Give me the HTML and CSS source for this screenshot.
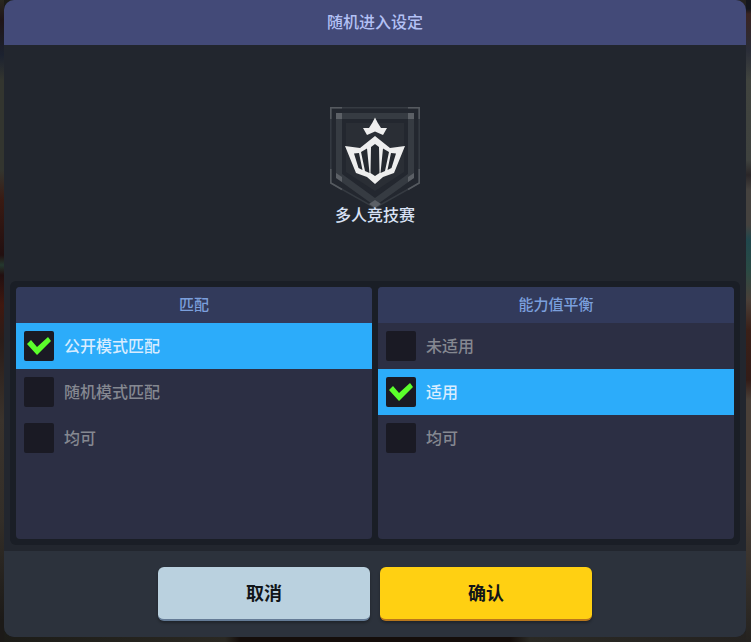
FILE: index.html
```
<!DOCTYPE html>
<html lang="zh-CN">
<head>
  <meta charset="UTF-8">
  <meta name="viewport" content="width=device-width, initial-scale=1.0">
  <title>随机进入设定</title>
  <link rel="stylesheet" href="styles.css">
</head>
<body>
  <form class="dialog">
    <h1 class="title">随机进入设定</h1>

    <div class="mode">
      <svg class="emblem" width="90" height="104" viewBox="0 0 90 104" aria-hidden="true">
        <!-- outer frame -->
        <path d="M.8 .8H89.2V76L45 101 .8 76Z" fill="#23272f" stroke="#363b42" stroke-width="1.5"/>
        <path d="M.8 12V.8H12M78 .8H89.2V12M.8 62V76L12 82.5M89.2 62V76L78 82.5" fill="none" stroke="#565a60" stroke-width="1.5"/>
        <!-- thick band -->
        <path d="M6 6H84V71L45 99 6 71ZM12 12V67L45 91 78 67V12Z" fill="#363b42" fill-rule="evenodd"/>
        <path d="M6 6H12V12H6ZM78 6H84V12H78ZM6 66L12 70V75L6 71ZM84 66L78 70V75L84 71ZM45 93L51 97 45 101 39 97Z" fill="#5c6066"/>
        <path d="M16 16H74V65L45 84 16 65Z" fill="#2a2e35"/>
        <!-- helmet -->
        <path d="M45 10.500Q48 17 51 21L57 21 53 28 45 24.500 37 28 33 21 39 21Q42 17 45 10.500Z" fill="#eee"/>
        <path d="M45 29L60 41 75 39 64 66 53 70 45 77 37 70 26 66 15 39 30 41Z" fill="#eee"/>
        <path d="M24 46.500L29 46 32.500 63 28.500 61ZM31 45L37 41.500 39.500 66 35 64ZM41 40L45 37 49 40 49.500 66 45 69 40.500 66ZM53 41.500L59 45 55 64 50.500 66ZM61 46L66 46.500 61.500 61 57.500 63Z" fill="#252930"/>
      </svg>
      <p class="mode-name">多人竞技赛</p>
    </div>

    <div class="options">
      <fieldset class="group" aria-labelledby="match-title">
        <h2 class="group-title" id="match-title">匹配</h2>
        <label class="option"><input type="checkbox" name="match" value="open" checked><span>公开模式匹配</span></label>
        <label class="option"><input type="checkbox" name="match" value="random"><span>随机模式匹配</span></label>
        <label class="option"><input type="checkbox" name="match" value="any"><span>均可</span></label>
      </fieldset>
      <fieldset class="group" aria-labelledby="balance-title">
        <h2 class="group-title" id="balance-title">能力值平衡</h2>
        <label class="option"><input type="checkbox" name="balance" value="off"><span>未适用</span></label>
        <label class="option"><input type="checkbox" name="balance" value="on" checked><span>适用</span></label>
        <label class="option"><input type="checkbox" name="balance" value="any"><span>均可</span></label>
      </fieldset>
    </div>

    <div class="actions">
      <button class="button cancel" type="button">取消</button>
      <button class="button confirm" type="button">确认</button>
    </div>
  </form>
</body>
</html>
```
FILE: styles.css
```
* {
  box-sizing: border-box;
}
body {
  margin: 0;
  padding: 0 5px 5px 4px;
  min-height: 100vh;
  display: flex;
  font-family: "Noto Sans CJK SC", sans-serif;
  color: #d9e2f5;
  /* dimmed game scene behind the dialog */
  background:
    linear-gradient(#14161c 0, #14161c 9px, #3a2422 14px, #2a2d38 50px, #41443f 80px, #3f423f 160px, #2a2628 175px, #45423f 190px, #45423f 225px, #20474d 240px, #2a4a44 270px, #4a3f38 300px, #3a2018 330px, #331c17 380px, #4a4038 400px, #4a4038 500px, #252320 640px) right / 5px 100% no-repeat,
    linear-gradient(#2a2820 0, #1f1518 20px, #1c2230 55px, #33352f 80px, #33352f 170px, #3a1a12 200px, #220f10 255px, #24382f 265px, #220f10 275px, #40180f 305px, #2a1c18 340px, #3a332c 420px, #332e28 520px, #1c1a18 620px) left / 4px 100% no-repeat,
    linear-gradient(90deg, #1c1c18 0, #2a2822 225px, #140d0a 240px, #140d0a 510px, #2a2924 530px, #242220 100%);
}
.dialog {
  flex: 1;
  display: flex;
  flex-direction: column;
  border-radius: 10px;
  overflow: hidden;
  background-color: #22262e;
}
.title {
  margin: 0;
  padding: 9px 0 12px;
  background-color: #434a78;
  color: #b3c1f5;
  font-size: 16px;
  font-weight: 500;
  line-height: 24px;
  text-align: center;
}
.mode {
  flex: 1;
  display: flex;
  flex-direction: column;
  align-items: center;
  justify-content: center;
  padding-top: 7px;
}
.emblem {
  display: block;
}
.mode-name {
  position: relative; /* keeps the name above the emblem tip */
  margin: -9px 0 0;
  font-size: 16px;
  font-weight: 500;
  line-height: 24px;
}
.options {
  display: grid;
  grid-template-columns: 1fr 1fr;
  gap: 6px;
  margin: 0 6px 6px;
  padding: 6px;
  border-radius: 6px;
  background-color: #1a1e26;
}
.group {
  margin: 0;
  padding: 0;
  min-width: 0;
  min-height: 252px;
  border: none;
  border-radius: 4px;
  overflow: hidden;
  background-color: #2c2f44;
}
.group-title {
  margin: 0;
  padding-bottom: 2px;
  background-color: #323a5b;
  color: #7b9fdc;
  font-size: 15px;
  font-weight: 500;
  line-height: 34px;
  text-align: center;
}
.option {
  display: flex;
  align-items: center;
  gap: 10px;
  height: 46px;
  padding: 0 8px;
  color: #858891;
  font-size: 16px;
  font-weight: 500;
  cursor: pointer;
}
.option span {
  padding-bottom: 2px;
}
.option:has(:checked) {
  background-color: #2cacfa;
  color: #d8ecff;
}
.option input {
  appearance: none;
  flex: none;
  width: 30px;
  height: 30px;
  margin: 0;
  border-radius: 2px;
  background-color: #1a1a24;
}
.option input:checked::before {
  content: "";
  display: block;
  height: 100%;
  background-color: #5bff2b;
  clip-path: polygon(3px 13px, 7px 9px, 13px 16px, 24px 6px, 27px 10px, 13px 24px);
}
.actions {
  display: flex;
  justify-content: center;
  gap: 10px;
  padding: 16px;
  background-color: #2c323c;
}
.button {
  width: 212px;
  height: 54px;
  padding: 0 0 2px;
  border: none;
  border-bottom: 2px solid;
  border-radius: 6px;
  box-shadow: 0 2px 3px rgba(0, 0, 0, 0.3);
  color: #111519;
  font-family: inherit;
  font-size: 18px;
  font-weight: 700;
  cursor: pointer;
}
.cancel {
  background-color: #bad1df;
  border-color: #647b96;
}
.confirm {
  background-color: #ffd012;
  border-color: #b9771c;
}
```
